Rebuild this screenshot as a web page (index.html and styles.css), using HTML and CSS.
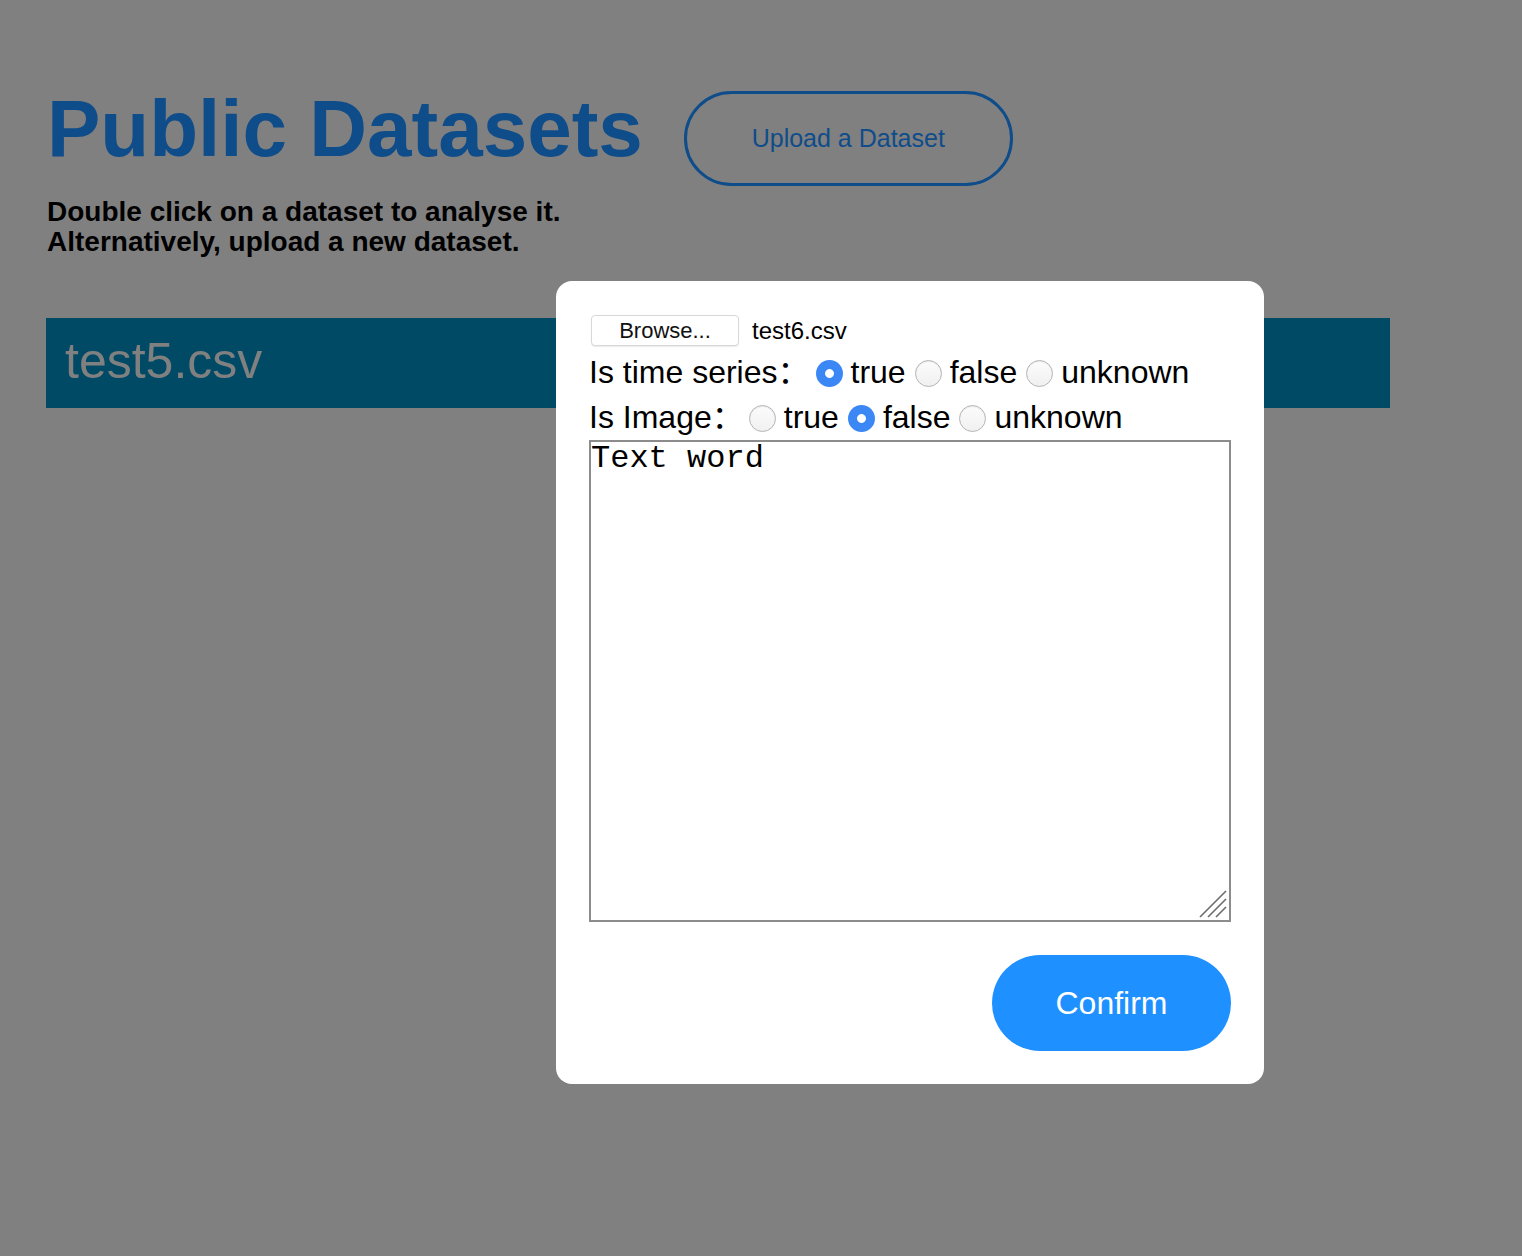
FILE: index.html
```html
<!DOCTYPE html>
<html lang="en">
<head>
<meta charset="utf-8">
<title>Public Datasets</title>
<link rel="stylesheet" href="styles.css">
</head>
<body>
<div class="page">
  <header class="header">
    <h1 class="title">Public Datasets</h1>
    <button class="upload-btn" type="button">Upload a Dataset</button>
  </header>
  <p class="subtitle">Double click on a dataset to analyse it.<br>Alternatively, upload a new dataset.</p>
  <div class="dataset-list">
    <div class="dataset-item">test5.csv</div>
  </div>
</div>

<div class="modal">
  <div class="file-row">
    <button class="browse-btn" type="button">Browse...</button>
    <span class="file-name">test6.csv</span>
  </div>
  <div class="option-row">
    <span class="option-label">Is time series：</span>
    <label class="radio-label first-ts"><input type="radio" name="ts" checked><span>true</span></label>
    <label class="radio-label"><input type="radio" name="ts"><span>false</span></label>
    <label class="radio-label"><input type="radio" name="ts"><span>unknown</span></label>
  </div>
  <div class="option-row">
    <span class="option-label">Is Image：</span>
    <label class="radio-label first-img"><input type="radio" name="img"><span>true</span></label>
    <label class="radio-label"><input type="radio" name="img" checked><span>false</span></label>
    <label class="radio-label"><input type="radio" name="img"><span>unknown</span></label>
  </div>
  <div class="text-wrap">
    <textarea class="text-box">Text word</textarea>
    <svg class="grip" width="28" height="28" viewBox="0 0 28 28" aria-hidden="true">
      <line x1="1" y1="27" x2="27" y2="1" stroke="#6a6a6a" stroke-width="1.6"/>
      <line x1="9" y1="27" x2="27" y2="9" stroke="#6a6a6a" stroke-width="1.6"/>
      <line x1="17" y1="27" x2="27" y2="17" stroke="#6a6a6a" stroke-width="1.6"/>
    </svg>
  </div>
  <div class="actions">
    <button class="confirm-btn" type="button">Confirm</button>
  </div>
</div>
</body>
</html>
```

FILE: styles.css
```css
html, body {
  margin: 0;
  padding: 0;
}

body {
  background: #808080;
  font-family: "Liberation Sans", Arial, "Noto Sans CJK SC", sans-serif;
  min-height: 1256px;
  position: relative;
}

.page {
  padding: 88px 0 0 46px;
}

.header {
  display: flex;
  align-items: flex-start;
  padding-left: 1px;
}

.title {
  margin: 0;
  font-size: 80px;
  line-height: 82px;
  font-weight: bold;
  color: #0f4c8a;
}

.upload-btn {
  margin: 3px 0 0 41px;
  width: 329px;
  height: 95px;
  border: 3px solid #0f4c8a;
  border-radius: 48px;
  background: transparent;
  color: #0f4c8a;
  font-family: "Liberation Sans", Arial, sans-serif;
  font-size: 25px;
  padding: 0;
}

.subtitle {
  margin: 11px 0 0 1px;
  font-size: 28px;
  line-height: 30px;
  font-weight: bold;
  color: #000;
}

.dataset-list {
  margin-top: 61px;
  width: 1344px;
}

.dataset-item {
  height: 90px;
  background: #004a66;
  color: #808080;
  font-size: 50px;
  line-height: 86px;
  padding-left: 19px;
}

.modal {
  position: absolute;
  left: 556px;
  top: 281px;
  width: 642px;
  padding: 34px 33px 33px;
  background: #fff;
  border-radius: 16px;
  display: flex;
  flex-direction: column;
}

.file-row {
  display: flex;
  height: 35px;
  align-items: flex-start;
  padding-left: 2px;
}

.browse-btn {
  width: 148px;
  height: 31px;
  border: 1px solid #d8d8d8;
  border-radius: 4px;
  background: #fff;
  box-shadow: 0 1px 1px rgba(0, 0, 0, 0.08);
  font-family: "Liberation Sans", Arial, sans-serif;
  font-size: 22px;
  line-height: 29px;
  color: #111;
  padding: 0;
}

.file-name {
  margin-left: 13px;
  font-size: 24px;
  line-height: 31px;
  color: #000;
}

.option-row {
  display: flex;
  align-items: center;
  height: 45px;
  font-size: 32px;
  line-height: 45px;
  color: #000;
}

.option-label {
  white-space: nowrap;
  height: 45px;
}

.radio-label {
  display: flex;
  align-items: center;
  height: 45px;
  margin-left: 9px;
}

.radio-label.first-ts {
  margin-left: 6px;
}

.radio-label.first-img {
  margin-left: 5px;
}

.radio-label input {
  appearance: none;
  -webkit-appearance: none;
  width: 27px;
  height: 27px;
  margin: 2px 8px 0 0;
  border-radius: 50%;
  border: 1px solid #b4b4b4;
  background: linear-gradient(#fcfcfc, #f0f0f0);
  box-shadow: inset 0 1px 1px rgba(0, 0, 0, 0.08);
}

.radio-label input:checked {
  border: none;
  box-shadow: none;
  background: radial-gradient(circle, #fff 0 4px, #3b87f5 4.8px);
}

.text-wrap {
  position: relative;
  height: 482px;
}

.text-box {
  display: block;
  box-sizing: border-box;
  width: 642px;
  height: 482px;
  margin: 0;
  border: 2px solid #8c8c8c;
  padding: 0;
  font-family: "Liberation Mono", "Courier New", monospace;
  font-size: 32px;
  line-height: 34px;
  color: #000;
  resize: none;
  outline: none;
  background: #fff;
}

.grip {
  position: absolute;
  right: 4px;
  bottom: 4px;
}

.actions {
  display: flex;
  justify-content: flex-end;
  margin-top: 33px;
}

.confirm-btn {
  width: 239px;
  height: 96px;
  border: none;
  border-radius: 48px;
  background: #1e90ff;
  color: #fff;
  font-family: "Liberation Sans", Arial, sans-serif;
  font-size: 32px;
  line-height: 90px;
  padding: 0;
}
```
